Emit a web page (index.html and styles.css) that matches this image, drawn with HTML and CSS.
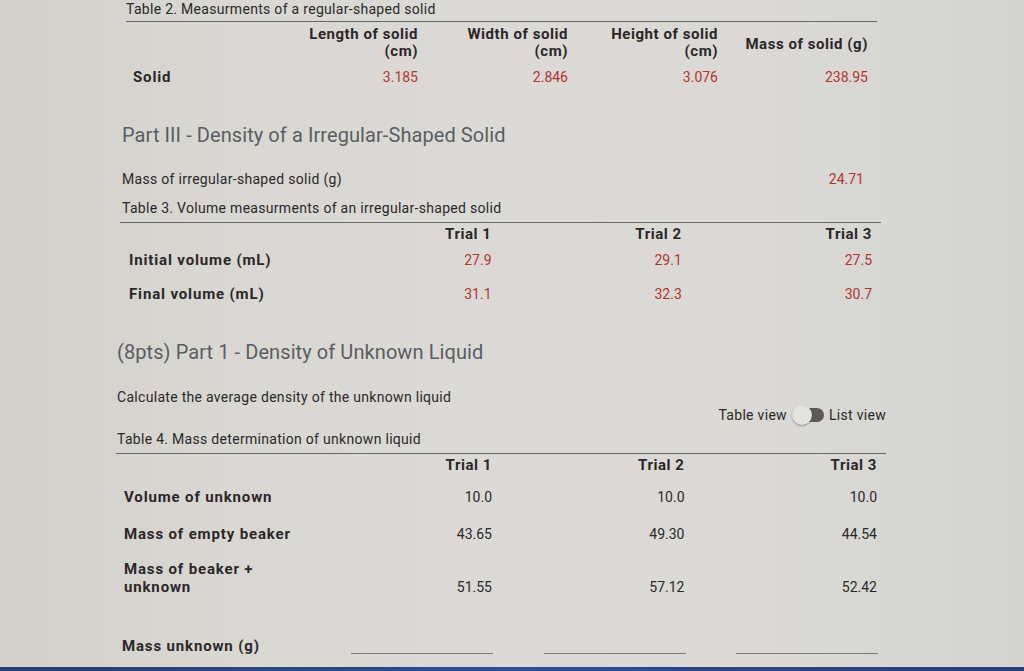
FILE: index.html
```html
<!DOCTYPE html>
<html lang="en">
<head>
<meta charset="utf-8">
<title>Density Lab</title>
<link rel="stylesheet" href="styles.css">
</head>
<body>
<main class="page">
  <section class="sec-t2">
    <div class="cap">Table 2. Measurments of a regular-shaped solid</div>
    <div class="grid t2">
      <div class="th"></div>
      <div class="th">Length of solid<br>(cm)</div>
      <div class="th">Width of solid<br>(cm)</div>
      <div class="th">Height of solid<br>(cm)</div>
      <div class="th mid">Mass of solid (g)</div>
      <div class="lab">Solid</div>
      <div class="val red">3.185</div>
      <div class="val red">2.846</div>
      <div class="val red">3.076</div>
      <div class="val red">238.95</div>
    </div>
  </section>

  <section class="sec-p3">
    <h2 class="title">Part III - Density of a Irregular-Shaped Solid</h2>
    <div class="line-row">
      <span>Mass of irregular-shaped solid (g)</span>
      <span class="red num">24.71</span>
    </div>
    <div class="cap cap3">Table 3. Volume measurments of an irregular-shaped solid</div>
    <div class="grid t3">
      <div class="th"></div>
      <div class="th">Trial 1</div>
      <div class="th">Trial 2</div>
      <div class="th">Trial 3</div>
      <div class="lab">Initial volume (mL)</div>
      <div class="val red">27.9</div>
      <div class="val red">29.1</div>
      <div class="val red">27.5</div>
      <div class="lab">Final volume (mL)</div>
      <div class="val red">31.1</div>
      <div class="val red">32.3</div>
      <div class="val red">30.7</div>
    </div>
  </section>

  <section class="sec-p1">
    <h2 class="title">(8pts) Part 1 - Density of Unknown Liquid</h2>
    <p class="desc">Calculate the average density of the unknown liquid</p>
    <div class="toggle-row">
      <span>Table view</span>
      <span class="switch"><span class="track"></span><span class="knob"></span></span>
      <span>List view</span>
    </div>
    <div class="cap cap4">Table 4. Mass determination of unknown liquid</div>
    <div class="grid t4">
      <div class="th"></div>
      <div class="th">Trial 1</div>
      <div class="th">Trial 2</div>
      <div class="th">Trial 3</div>
      <div class="lab">Volume of unknown</div>
      <div class="val">10.0</div>
      <div class="val">10.0</div>
      <div class="val">10.0</div>
      <div class="lab">Mass of empty beaker</div>
      <div class="val">43.65</div>
      <div class="val">49.30</div>
      <div class="val">44.54</div>
      <div class="lab end">Mass of beaker +<br>unknown</div>
      <div class="val end">51.55</div>
      <div class="val end">57.12</div>
      <div class="val end">52.42</div>
      <div class="lab unk">Mass unknown (g)</div>
      <div class="inp"><span class="field"></span></div>
      <div class="inp"><span class="field"></span></div>
      <div class="inp"><span class="field"></span></div>
    </div>
  </section>
  <div class="screen-edge"></div>
</main>
</body>
</html>
```

FILE: styles.css
```css
* { box-sizing: border-box; }
html, body { margin: 0; padding: 0; }
body {
  width: 1024px;
  height: 671px;
  overflow: hidden;
  font-family: Roboto, "Liberation Sans", Arial, sans-serif;
  font-size: 14px;
  letter-spacing: 0.3px;
  color: #2a2929;
  background: linear-gradient(90deg, #d2d0cb 0%, #d9d7d2 20%, #dcdad6 50%, #dad9d5 78%, #d3d4d2 100%);
}
.page {
  height: 671px;
  display: flex;
  flex-direction: column;
}
.red { color: #b5332f; }
.num { letter-spacing: 0; }
.cap { line-height: 16px; color: #2a2929; }
.title {
  margin: 0;
  font-size: 20px;
  line-height: 24px;
  font-weight: 400;
  letter-spacing: 0.08px;
  color: #595e62;
}
.grid { display: grid; border-top: 1px solid #666; }
.th {
  text-align: right;
  padding-right: 9px;
  font-size: 15px;
  font-weight: 700;
  letter-spacing: 0.55px;
  color: #2b2729;
  line-height: 17px;
}
.th.mid { align-self: center; }
.lab {
  font-size: 15px;
  font-weight: 700;
  letter-spacing: 0.85px;
  color: #2b2729;
  line-height: 17px;
  align-self: center;
}
.val {
  text-align: right;
  padding-right: 9px;
  line-height: 17px;
  letter-spacing: 0;
  align-self: center;
}
.end { align-self: end; }

/* Table 2 */
.sec-t2 { margin-left: 126px; width: 751px; padding-top: 1px; }
.t2 {
  margin-top: 4px;
  grid-template-columns: 151px repeat(4, 150px);
  grid-template-rows: 36px 31px;
  padding-top: 4px;
}
.t2 .lab { padding-left: 7px; }

/* Part III */
.sec-p3 { margin-left: 120px; width: 761px; margin-top: 30px; }
.sec-p3 .title { margin-left: 2px; }
.line-row {
  display: flex;
  justify-content: space-between;
  margin: 24px 0 0 2px;
  padding-right: 17px;
  line-height: 16px;
}
.cap3 { margin: 13px 0 0 2px; }
.t3 {
  margin-top: 6px;
  grid-template-columns: repeat(4, 1fr);
  grid-template-rows: 20px 34px 34px;
}
.t3 .th { align-self: start; padding-top: 3px; }
.t3 .lab { padding-left: 9px; }

/* Part 1 */
.sec-p1 { margin-left: 116px; width: 770px; margin-top: 29px; }
.sec-p1 .title { margin-left: 1px; }
.desc { margin: 25px 0 0 1px; line-height: 16px; }
.toggle-row {
  display: flex;
  justify-content: flex-end;
  align-items: center;
  gap: 5px;
  height: 20px;
  line-height: 16px;
}
.switch { position: relative; width: 32px; height: 20px; }
.track {
  position: absolute;
  left: 10px; top: 3px;
  width: 22px; height: 14px;
  border-radius: 7px;
  background: #5b5a59;
}
.knob {
  position: absolute;
  left: 0; top: 0;
  width: 20px; height: 20px;
  border-radius: 50%;
  background: #e4e3e0;
  box-shadow: 0 1px 2px rgba(0,0,0,0.35);
}
.cap4 { margin: 6px 0 0 1px; }
.t4 {
  margin-top: 6px;
  grid-template-columns: repeat(4, 1fr);
  grid-template-rows: 22px 42px 32px 46px 62px;
}
.t4 .th { align-self: start; padding-top: 3px; }
.t4 .lab { padding-left: 8px; line-height: 18px; }
.t4 .val { line-height: 18px; }
.t4 .lab.unk { align-self: end; padding-left: 6px; padding-bottom: 3px; }
.inp {
  display: flex;
  justify-content: flex-end;
  align-items: flex-end;
  padding-right: 8px;
  padding-bottom: 4px;
}
.field { width: 142px; border-bottom: 1px solid #7c7b79; }
.screen-edge {
  margin-top: auto;
  height: 4px;
  background: linear-gradient(90deg, #213f78, #2c4f93 50%, #243f7a);
}
```
